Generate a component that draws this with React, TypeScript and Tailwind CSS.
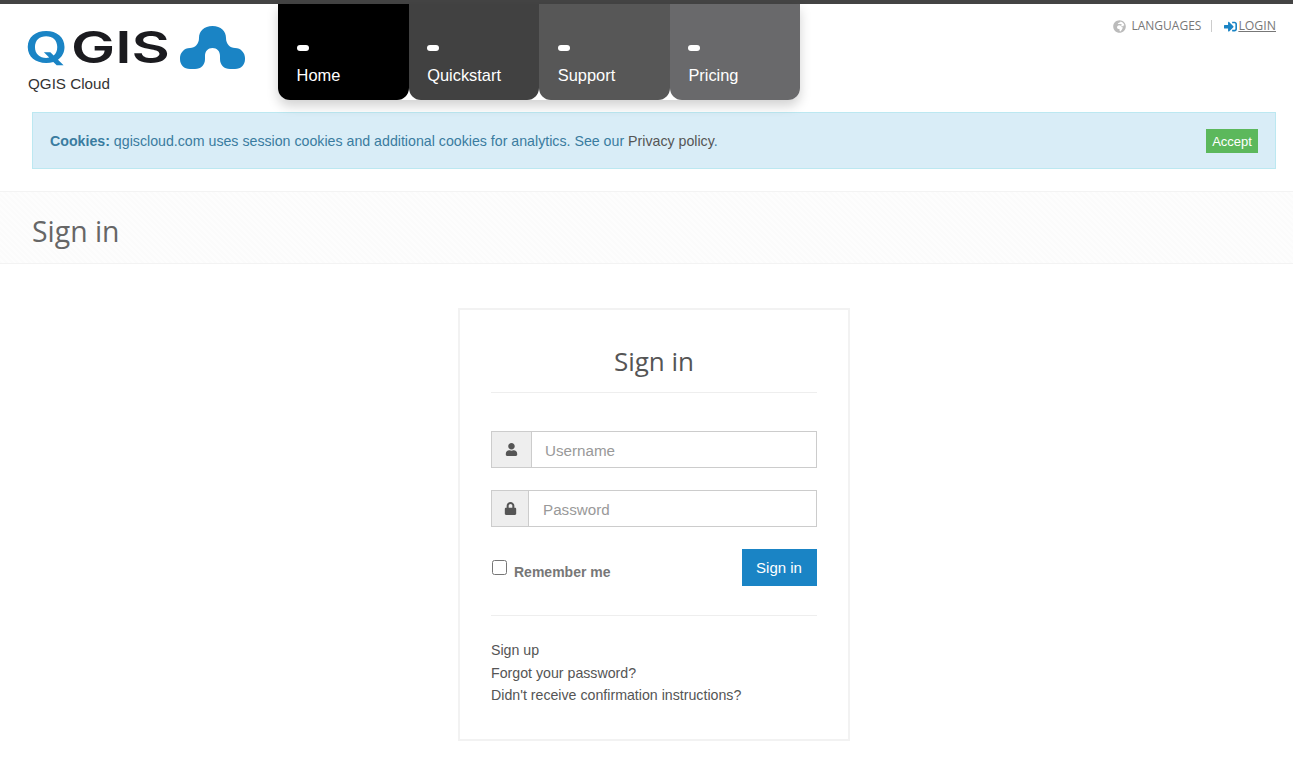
import { FaGlobeAfrica, FaLock, FaSignInAlt, FaUser } from 'react-icons/fa';

const NAV_ITEMS = [
  { label: 'Home', color: 'bg-black' },
  { label: 'Quickstart', color: 'bg-[#414141]' },
  { label: 'Support', color: 'bg-[#575757]' },
  { label: 'Pricing', color: 'bg-[#69696b]' },
];

function Logo() {
  return (
    <svg width="240" height="93" viewBox="-10 -21 240 93" className="block">
      <text transform="translate(-2 38) scale(1.25 1)" fontFamily="Inter, sans-serif" fontWeight="600" fontSize="44" fill="#1a84c5">Q</text>
      <text transform="translate(44 38) scale(1.34 1)" fontFamily="Inter, sans-serif" fontWeight="600" fontSize="44" fill="#1b1b1f">GIS</text>
      <text x="1" y="64" fontFamily="'Liberation Sans', sans-serif" fontSize="15.2" fill="#333">QGIS Cloud</text>
      <path
        d="M185.5 1 C194 1 199 6 199 13 C199 19 203 23 208 23 C214 23 218 28 218 33 V34 C218 40 214 44 208 44 H203 C197 44 193 40 193 34 V31 C193 26 190 23 185.5 23 C181 23 178 26 178 31 V34 C178 40 174 44 168 44 H163 C157 44 153 40 153 34 V33 C153 28 157 23 163 23 C168 23 172 19 172 13 C172 6 177 1 185.5 1 Z"
        fill="#1a84c5"
      />
    </svg>
  );
}

function InputGroup({ icon, placeholder, addonWidth, indent, type }: { icon: React.ReactNode; placeholder: string; addonWidth: string; indent: string; type: string }) {
  return (
    <div className="flex h-[37px] border border-[#ccc]">
      <span className={`flex items-center justify-center border-r border-[#ccc] bg-[#eee] text-[#555] ${addonWidth}`}>{icon}</span>
      <input type={type} placeholder={placeholder} className={`min-w-0 flex-1 bg-white pt-[3px] text-[15.2px] outline-none placeholder:text-[#999] ${indent}`} />
    </div>
  );
}

export default function App() {
  return (
    <div className="min-h-[777px] overflow-hidden bg-white font-['Liberation_Sans',sans-serif] text-[14.2px] text-[#555]">
      <div className="h-1 bg-[#444]" />

      <header className="flex h-24 items-start">
        <div className="w-[278px] pl-[17px]">
          <Logo />
        </div>
        <nav className="flex rounded-b-xl shadow-[0_6px_12px_rgba(0,0,0,0.18)]">
          {NAV_ITEMS.map(item => (
            <a key={item.label} className={`flex h-24 w-[130.6px] flex-col rounded-b-xl pl-[18.6px] pt-[41px] text-white ${item.color}`}>
              <span className="h-[6px] w-3 rounded-sm bg-white" />
              <span className="mt-[14px] text-[16.4px] leading-5">{item.label}</span>
            </a>
          ))}
        </nav>
        <div className="ml-auto flex items-center pr-[17px] pt-[13px] font-['Open_Sans',sans-serif] text-[12px] text-[#777]">
          <FaGlobeAfrica className="mr-[5px] text-[13px] text-[#bbb]" />
          <span>LANGUAGES</span>
          <span className="ml-[10px] mr-3 h-3 w-px bg-[#ccc]" />
          <FaSignInAlt className="mr-px text-[13px] text-[#1a84c5]" />
          <a className="text-[12.3px] underline">LOGIN</a>
        </div>
      </header>

      <div className="ml-8 mr-[17px] mt-3 flex h-[57px] items-center justify-between border border-[#bce8f1] bg-[#d9edf7] px-[17px] text-[#3a7ca0]">
        <p className="pt-[3px]"><b>Cookies:</b> qgiscloud.com uses session cookies and additional cookies for analytics. See our <a className="text-[#555]">Privacy policy</a>.</p>
        <button className="h-6 w-[52px] bg-[#5cb85c] pt-[3px] text-[13px] text-white">Accept</button>
      </div>

      <div className="mt-[22px] flex h-[73px] items-center border-y border-[#f3f3f3] bg-[repeating-linear-gradient(45deg,#fbfbfb_0_2px,#fdfdfd_2px_4px)] pl-8 pt-[7px]">
        <h1 className="font-['Open_Sans',sans-serif] text-[28.4px] leading-none text-[#666]">Sign in</h1>
      </div>

      <main className="flex justify-center pl-[15px] pt-[44px]">
        <div className="h-[433px] w-[392px] border-2 border-[#f2f2f2] px-[31px] pt-[33px]">
          <h2 className="border-b border-[#eee] pb-[13px] text-center font-['Open_Sans',sans-serif] text-[26px] leading-[36px] text-[#555]">Sign in</h2>

          <div className="mt-[38px] flex flex-col gap-[22px]">
            <InputGroup type="text" placeholder="Username" addonWidth="w-[40px]" indent="pl-[13px]" icon={<FaUser className="text-[13px]" />} />
            <InputGroup type="password" placeholder="Password" addonWidth="w-[37px]" indent="pl-[14px]" icon={<FaLock className="text-[13px]" />} />
          </div>

          <div className="mt-[22px] flex items-start justify-between border-b border-[#eee] pb-[29px]">
            <label className="mt-[11px] flex items-start text-[14px] font-bold text-[#777]">
              <input type="checkbox" className="ml-px mr-[7px] h-[15px] w-[15px]" />
              <span className="mt-[2px]">Remember me</span>
            </label>
            <button className="h-[37px] w-[75px] bg-[#1a84c5] pr-px pt-[2px] text-[15px] text-white">Sign in</button>
          </div>

          <div className="mt-6 flex flex-col gap-[2.5px] leading-5">
            <a>Sign up</a>
            <a>Forgot your password?</a>
            <a>Didn't receive confirmation instructions?</a>
          </div>
        </div>
      </main>
    </div>
  );
}
